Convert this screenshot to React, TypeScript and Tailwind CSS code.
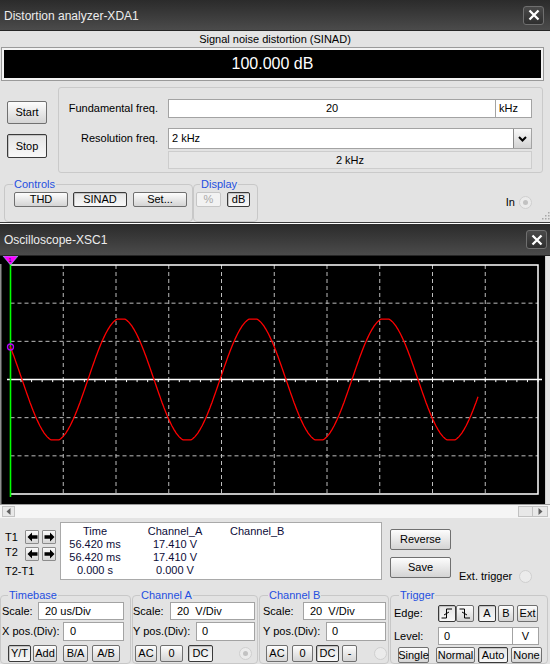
import type { ReactNode } from "react";

const FONT = "font-['Liberation_Sans',Arial,sans-serif]";

function Btn({
  className = "",
  pressed = false,
  disabled = false,
  children,
}: {
  className?: string;
  pressed?: boolean;
  disabled?: boolean;
  children?: ReactNode;
}) {
  const look = disabled
    ? "border-[#c6c6c6] bg-[#f2f2f2] text-[#a8a8a8]"
    : pressed
      ? "border-[#3a3a3a] bg-linear-to-b from-[#e4e4e4] to-[#f8f8f8] text-black shadow-[inset_1px_1px_0_#c4c4c4]"
      : "border-[#707070] bg-linear-to-b from-[#fdfdfd] to-[#d4d4d4] text-black";
  return (
    <div
      className={`flex shrink-0 items-center justify-center rounded-[2px] border text-[11px] leading-none ${look} ${className}`}
    >
      {children}
    </div>
  );
}

function Field({ className = "", children }: { className?: string; children?: ReactNode }) {
  return (
    <div
      className={`flex shrink-0 items-center border border-[#a3a3a3] bg-white text-[11px] leading-none text-black ${className}`}
    >
      {children}
    </div>
  );
}

function Group({
  title,
  className = "",
  legend = "ml-[7px]",
  children,
}: {
  title: string;
  className?: string;
  legend?: string;
  children?: ReactNode;
}) {
  return (
    <fieldset className={`shrink-0 rounded-[4px] border border-[#c8c8c8] ${className}`}>
      <legend className={`px-[1px] text-[11px] leading-[14px] text-[#1f4fe0] ${legend}`}>{title}</legend>
      {children}
    </fieldset>
  );
}

function Radio({ dot = false, className = "" }: { dot?: boolean; className?: string }) {
  return (
    <div
      className={`flex h-[13px] w-[13px] shrink-0 items-center justify-center rounded-full border border-[#cfcfcf] bg-[#ebebeb] ${className}`}
    >
      {dot && <div className="h-[5px] w-[5px] rounded-full bg-[#c2c2c2]" />}
    </div>
  );
}

function TitleBar({ title, tall, right }: { title: string; tall: string; right: string }) {
  return (
    <div
      className={`flex items-center justify-between border-b border-[#262626] bg-linear-to-b from-[#2b2b2b] to-[#4b4b4b] pl-[4px] ${tall} ${right}`}
    >
      <span className="pt-[1px] text-[12px] text-[#ededed]">{title}</span>
      <div className="flex h-[19px] w-[21px] items-center justify-center rounded-[3px] border border-[#6f6f6f] bg-linear-to-b from-[#4a4a4a] to-[#2f2f2f]">
        <svg width="12" height="12" viewBox="0 0 12 12">
          <path d="M1.5 1.5 L10.5 10.5 M10.5 1.5 L1.5 10.5" stroke="#fff" strokeWidth="2.3" />
        </svg>
      </div>
    </div>
  );
}

function Arrow({ left }: { left?: boolean }) {
  return (
    <div className="flex h-[14px] w-[14px] shrink-0 items-center justify-center rounded-[1px] border border-[#8c8c8c] bg-linear-to-b from-[#fafafa] to-[#d6d6d6]">
      <svg width="11" height="10" viewBox="0 0 11 10">
        <path
          d={left ? "M0.5 5 L5 0.5 L5 3.3 L10.5 3.3 L10.5 6.7 L5 6.7 L5 9.5 Z" : "M10.5 5 L6 0.5 L6 3.3 L0.5 3.3 L0.5 6.7 L6 6.7 L6 9.5 Z"}
          fill="#000"
        />
      </svg>
    </div>
  );
}

function Scope() {
  const top = 9;
  const bottom = 238;
  const left = 10.5;
  const right = 538;
  const dx = (right - left) / 10;
  const dy = (bottom - top) / 6;
  const cy = top + 3 * dy;

  const pts: string[] = [];
  for (let x = 10; x <= 478; x += 1) {
    let s = Math.sin((2 * Math.PI * (x - 88)) / 132);
    s = Math.max(-0.982, Math.min(0.982, s));
    pts.push(`${x},${(cy - 61.5 * s).toFixed(1)}`);
  }

  const ticks: number[] = [];
  for (let t = left; t <= right + 0.1; t += dx / 5) ticks.push(t);

  return (
    <svg width="550" height="248" viewBox="0 0 550 248" className="block bg-black">
      <rect x="0" y="8" width="1.5" height="240" fill="#8e8e8e" />
      <rect x="545" y="0" width="1" height="248" fill="#cfcfcf" />
      <rect x="546" y="0" width="4" height="248" fill="#e4e4e4" />
      {Array.from({ length: 9 }, (_, i) => (
        <line
          key={`v${i}`}
          x1={left + dx * (i + 1)}
          x2={left + dx * (i + 1)}
          y1={top}
          y2={bottom}
          stroke="#bdbdbd"
          strokeDasharray="4 3"
        />
      ))}
      {[1, 2, 4, 5].map((i) => (
        <line key={`h${i}`} x1={left} x2={right} y1={top + dy * i} y2={top + dy * i} stroke="#bdbdbd" strokeDasharray="4 3" />
      ))}
      <path d={`M${left} ${top} H${right} V${bottom} H${left}`} stroke="#fff" strokeWidth="1.5" fill="none" />
      <line x1="7" x2="542" y1={cy} y2={cy} stroke="#fff" strokeWidth="1.6" />
      {ticks.map((t, i) => (
        <line key={`t${i}`} x1={t} x2={t} y1={cy} y2={cy + 2.6} stroke="#fff" strokeWidth="1" />
      ))}
      <line x1="10.5" x2="10.5" y1="5" y2="241" stroke="#00ff00" strokeWidth="1.6" />
      <polyline points={pts.join(" ")} fill="none" stroke="#ff0000" strokeWidth="1.3" />
      <circle cx="10.5" cy="91" r="3" fill="none" stroke="#b400ff" strokeWidth="1.3" />
      <polygon points="3,0 18,0 10.5,9" fill="#ff00ff" stroke="#7fd4ff" strokeWidth="0.6" />
      <text x="8.6" y="5.8" fontSize="5.5" fill="#222" fontFamily="Liberation Sans">1</text>
    </svg>
  );
}

export default function App() {
  return (
    <div className={`h-[664px] w-[550px] overflow-hidden bg-[#e3e3e3] text-black ${FONT}`}>
      {/* Distortion analyzer */}
      <TitleBar title="Distortion analyzer-XDA1" tall="h-[31px]" right="pr-[6px]" />
      <div className="h-[191px] bg-[#e3e3e3]">
        <div className="flex h-[17px] items-center justify-center text-[11px]">Signal noise distortion (SINAD)</div>
        <div className="ml-[2px] flex h-[32px] w-[541px] items-center justify-center border-2 border-[#f3f3f3] bg-black text-[16px] text-white ring-1 ring-[#9a9a9a]">
          100.000 dB
        </div>

        <div className="mt-[7px] flex h-[86px]">
          <div className="w-[58px] shrink-0 pl-[7px] pt-[14px]">
            <Btn className="h-[23px] w-[40px] text-[11.5px]">Start</Btn>
            <Btn pressed className="mt-[10px] h-[24px] w-[40px] text-[11.5px]">
              Stop
            </Btn>
          </div>
          <div className="h-[86px] w-[485px] shrink-0 rounded-[3px] border border-[#cacaca] pt-[11px] text-[11px]">
            <div className="flex h-[19px] items-center">
              <span className="w-[109px] pr-[10px] text-right">Fundamental freq.</span>
              <Field className="h-[19px] w-[328px] justify-center">20</Field>
              <Field className="h-[19px] w-[36px] border-l-0 pl-[3px]">kHz</Field>
            </div>
            <div className="mt-[10px] flex h-[21px] items-center">
              <span className="w-[109px] pr-[10px] text-right">Resolution freq.</span>
              <Field className="h-[21px] w-[364px]">
                <span className="flex-1 pl-[3px]">2 kHz</span>
                <div className="flex h-full w-[18px] items-center justify-center border-l border-[#8a8a8a] bg-linear-to-b from-[#f8f8f8] to-[#d3d3d3]">
                  <svg width="11" height="8" viewBox="0 0 11 8">
                    <path d="M2 2 L5.5 5.5 L9 2" stroke="#000" strokeWidth="2" fill="none" />
                  </svg>
                </div>
              </Field>
            </div>
            <div className="ml-[109px] mt-[2px] flex h-[18px] w-[364px] items-center justify-center border border-[#cdcdcd] bg-[#e7e7e7]">
              2 kHz
            </div>
          </div>
        </div>

        <div className="flex h-[49px]">
          <Group title="Controls" className="ml-[4px] mt-[4px] w-[189px] pb-[10px]" legend="ml-[8px]">
            <div className="mt-[1px] flex h-[15px]">
              <Btn className="ml-[9px] h-[15px] w-[54px]">THD</Btn>
              <Btn pressed className="ml-[5px] h-[15px] w-[54px]">
                SINAD
              </Btn>
              <Btn className="ml-[6px] h-[15px] w-[54px]">Set...</Btn>
            </div>
          </Group>
          <Group title="Display" className="mt-[4px] w-[65px] pb-[10px]" legend="ml-[6px]">
            <div className="mt-[1px] flex h-[15px]">
              <Btn disabled className="ml-[2px] h-[15px] w-[25px]">
                %
              </Btn>
              <Btn pressed className="ml-[6px] h-[15px] w-[23px]">
                dB
              </Btn>
            </div>
          </Group>
          <div className="ml-auto mt-[23px] flex h-[13px] items-center gap-[4px] text-[11px]">
            <span>In</span>
            <Radio dot />
          </div>
          <svg width="10" height="10" viewBox="0 0 10 10" className="ml-[8px] mt-[37px]">
            {[
              [8, 2],
              [8, 5],
              [8, 8],
              [5, 5],
              [5, 8],
              [2, 8],
            ].map(([x, y], i) => (
              <rect key={i} x={x} y={y} width="1.5" height="1.5" fill="#a8a8a8" />
            ))}
          </svg>
        </div>
      </div>
      <div className="h-[1px] bg-[#3c3c3c]" />
      <div className="h-[1px] bg-white" />

      {/* Oscilloscope */}
      <TitleBar title="Oscilloscope-XSC1" tall="h-[32px]" right="pr-[3px]" />
      <Scope />
      <div className="flex h-[14px] items-center border-t border-[#9a9a9a] bg-[#f5f5f5]">
        <div className="ml-[2px] flex h-[11px] w-[13px] items-center justify-center border border-[#c2c2c2] bg-[#e8e8e8]">
          <svg width="5" height="7" viewBox="0 0 5 7">
            <path d="M4.5 0 L0.5 3.5 L4.5 7 Z" fill="#606060" />
          </svg>
        </div>
        <div className="ml-auto mr-[2px] flex h-[11px]">
          <div className="w-[15px] border border-[#c2c2c2] bg-[#e8e8e8]" />
          <div className="flex w-[15px] items-center justify-center border border-l-0 border-[#c2c2c2] bg-[#e8e8e8]">
            <svg width="5" height="7" viewBox="0 0 5 7">
              <path d="M0.5 0 L4.5 3.5 L0.5 7 Z" fill="#606060" />
            </svg>
          </div>
        </div>
      </div>

      <div className="h-[146px] bg-[#e3e3e3] text-[11px]">
        <div className="flex h-[66px]">
          <div className="w-[60px] shrink-0 pl-[5px]">
            <div className="mt-[12px] flex h-[14px] items-center">
              <span className="w-[20px]">T1</span>
              <Arrow left />
              <div className="ml-[3px]">
                <Arrow />
              </div>
            </div>
            <div className="mt-[3px] flex h-[14px] items-center">
              <span className="w-[20px] pb-[3px]">T2</span>
              <Arrow left />
              <div className="ml-[3px]">
                <Arrow />
              </div>
            </div>
            <div className="mt-[3px] flex h-[14px] items-center">T2-T1</div>
          </div>
          <div className="mt-[4px] h-[58px] w-[322px] shrink-0 border border-[#a9a9a9] bg-white pt-[2px] leading-[13px] text-[#0c0c38]">
            <div className="grid grid-cols-[68px_92px_1fr]">
              <span className="text-center">Time</span>
              <span className="text-center">Channel_A</span>
              <span className="pl-[9px]">Channel_B</span>
              <span className="text-center">56.420 ms</span>
              <span className="text-center">17.410 V</span>
              <span />
              <span className="text-center">56.420 ms</span>
              <span className="text-center">17.410 V</span>
              <span />
              <span className="text-center">0.000 s</span>
              <span className="text-center">0.000 V</span>
              <span />
            </div>
          </div>
          <div className="ml-[8px] shrink-0 pt-[11px]">
            <Btn className="h-[21px] w-[61px]">Reverse</Btn>
            <Btn className="mt-[7px] h-[21px] w-[61px]">Save</Btn>
          </div>
          <div className="ml-[8px] mt-[52px] flex h-[13px] items-center gap-[7px]">
            <span>Ext. trigger</span>
            <Radio />
          </div>
        </div>

        <div className="flex pt-[4px]">
          <Group title="Timebase" className="w-[131px]" legend="ml-[7px]">
            <div className="flex h-[18px] items-center">
              <span className="w-[37px] pl-[1px]">Scale:</span>
              <Field className="h-[18px] w-[86px] pl-[6px]">20 us/Div</Field>
            </div>
            <div className="mt-[2px] flex h-[19px] items-center">
              <span className="w-[62px] pl-[1px]">X pos.(Div):</span>
              <Field className="h-[19px] w-[61px] pl-[6px]">0</Field>
            </div>
            <div className="mt-[4px] flex h-[17px]">
              <Btn pressed className="ml-[7px] h-[17px] w-[23px]">
                Y/T
              </Btn>
              <Btn className="ml-[2px] h-[17px] w-[24px]">Add</Btn>
              <Btn className="ml-[6px] h-[17px] w-[25px]">B/A</Btn>
              <Btn className="ml-[4px] h-[17px] w-[28px]">A/B</Btn>
            </div>
          </Group>

          <Group title="Channel A" className="ml-[1px] w-[126px]" legend="ml-[7px]">
            <div className="flex h-[18px] items-center">
              <span className="w-[37px]">Scale:</span>
              <Field className="h-[18px] w-[85px] pl-[6px]">20&nbsp; V/Div</Field>
            </div>
            <div className="mt-[2px] flex h-[19px] items-center">
              <span className="w-[63px]">Y pos.(Div):</span>
              <Field className="h-[19px] w-[59px] pl-[5px]">0</Field>
            </div>
            <div className="mt-[4px] flex h-[17px] items-center">
              <Btn className="ml-[2px] h-[17px] w-[22px]">AC</Btn>
              <Btn className="ml-[3px] h-[17px] w-[23px]">0</Btn>
              <Btn pressed className="ml-[5px] h-[17px] w-[25px]">
                DC
              </Btn>
              <Radio dot className="ml-[26px]" />
            </div>
          </Group>

          <Group title="Channel B" className="ml-[1px] w-[130px]" legend="ml-[8px]">
            <div className="flex h-[18px] items-center">
              <span className="w-[43px] pl-[3px]">Scale:</span>
              <Field className="h-[18px] w-[83px] pl-[6px]">20&nbsp; V/Div</Field>
            </div>
            <div className="mt-[2px] flex h-[19px] items-center">
              <span className="w-[66px] pl-[3px]">Y pos.(Div):</span>
              <Field className="h-[19px] w-[60px] pl-[5px]">0</Field>
            </div>
            <div className="mt-[4px] flex h-[17px] items-center">
              <Btn className="ml-[6px] h-[17px] w-[22px]">AC</Btn>
              <Btn className="ml-[4px] h-[17px] w-[21px]">0</Btn>
              <Btn pressed className="ml-[3px] h-[17px] w-[23px]">
                DC
              </Btn>
              <Btn className="ml-[3px] h-[17px] w-[15px]">-</Btn>
              <Radio className="ml-[17px]" />
            </div>
          </Group>

          <Group title="Trigger" className="ml-[1px] w-[158px]" legend="ml-[8px]">
            <div className="mt-[3px] flex h-[17px] items-center">
              <span className="w-[47px] pl-[3px]">Edge:</span>
              <Btn pressed className="h-[17px] w-[18px] bg-[#f4f4f4]">
                <svg width="12" height="11" viewBox="0 0 12 11">
                  <path d="M0.5 10 H5.5 V1 H11" stroke="#000" strokeWidth="1" fill="none" />
                  <path d="M3 7 L8 4" stroke="#000" strokeWidth="1" />
                </svg>
              </Btn>
              <Btn className="h-[17px] w-[18px]">
                <svg width="12" height="11" viewBox="0 0 12 11">
                  <path d="M0.5 1 H5.5 V10 H11" stroke="#000" strokeWidth="1" fill="none" />
                  <path d="M3 4 L8 7" stroke="#000" strokeWidth="1" />
                </svg>
              </Btn>
              <Btn pressed className="ml-[4px] h-[17px] w-[18px]">
                A
              </Btn>
              <Btn className="ml-[2px] h-[17px] w-[16px]">B</Btn>
              <Btn className="ml-[3px] h-[17px] w-[21px]">Ext</Btn>
            </div>
            <div className="mt-[5px] flex h-[18px] items-center">
              <span className="w-[47px] pl-[3px]">Level:</span>
              <Field className="h-[18px] w-[75px] pl-[5px]">0</Field>
              <Field className="h-[18px] w-[26px] justify-center border-l-0">V</Field>
            </div>
            <div className="mt-[2px] flex h-[16px]">
              <Btn className="ml-[7px] h-[16px] w-[31px]">Single</Btn>
              <Btn className="ml-[7px] h-[16px] w-[39px]">Normal</Btn>
              <Btn pressed className="ml-[3px] h-[16px] w-[30px]">
                Auto
              </Btn>
              <Btn className="ml-[3px] h-[16px] w-[31px]">None</Btn>
            </div>
          </Group>
        </div>
      </div>
    </div>
  );
}
